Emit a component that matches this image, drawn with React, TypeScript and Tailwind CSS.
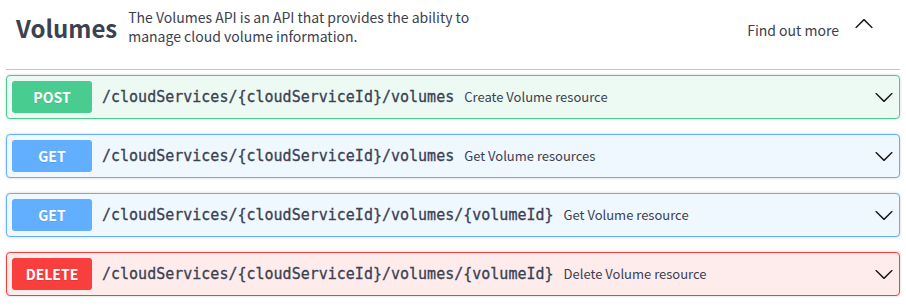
import React from "react";

type Op = {
  method: string;
  path: string;
  desc: string;
  badge: string;
  border: string;
  bg: string;
};

const ops: Op[] = [
  {
    method: "POST",
    path: "/cloudServices/{cloudServiceId}/volumes",
    desc: "Create Volume resource",
    badge: "bg-[#49cc90]",
    border: "border-[#49cc90]",
    bg: "bg-[#edfaf4]",
  },
  {
    method: "GET",
    path: "/cloudServices/{cloudServiceId}/volumes",
    desc: "Get Volume resources",
    badge: "bg-[#61affe]",
    border: "border-[#61affe]",
    bg: "bg-[#eff7ff]",
  },
  {
    method: "GET",
    path: "/cloudServices/{cloudServiceId}/volumes/{volumeId}",
    desc: "Get Volume resource",
    badge: "bg-[#61affe]",
    border: "border-[#61affe]",
    bg: "bg-[#eff7ff]",
  },
  {
    method: "DELETE",
    path: "/cloudServices/{cloudServiceId}/volumes/{volumeId}",
    desc: "Delete Volume resource",
    badge: "bg-[#f93e3e]",
    border: "border-[#f93e3e]",
    bg: "bg-[#feecec]",
  },
];

function Chevron({ up = false }: { up?: boolean }) {
  return (
    <svg
      width="20"
      height="20"
      viewBox="0 0 20 20"
      className={up ? "rotate-180" : ""}
      aria-hidden="true"
    >
      <path
        fill="#1a1a1a"
        d="M17.418 6.109c.272-.268.709-.268.979 0s.271.701 0 .969l-7.908 7.83c-.27.268-.707.268-.979 0l-7.908-7.83c-.27-.268-.27-.701 0-.969.271-.268.709-.268.979 0L10 13.25l7.418-7.141z"
      />
    </svg>
  );
}

export default function App() {
  return (
    <div className="w-[906px] h-[307px] bg-white px-[6px] font-['Noto_Sans_CJK_KR','Noto_Sans',sans-serif] text-[#3b4151]">
      <div className="flex items-center border-b border-[#c4c6cb] pl-[10px] pr-[28px] pt-[8px] pb-[23px] mb-[5px]">
        <h3 className="text-[24px] font-bold leading-none mr-[11px] mt-[1px]">Volumes</h3>
        <div className="text-[14px] leading-[19px]">
          The Volumes API is an API that provides the ability to
          <br />
          manage cloud volume information.
        </div>
        <div className="flex-1" />
        <a className="text-[14px] text-[#3b4151] mt-[6px] mr-[15px]">Find out more</a>
        <div className="-mt-[7px] -mr-[2px]">
          <Chevron up />
        </div>
      </div>
      <div className="flex flex-col gap-[15px]">
        {ops.map((op, i) => (
          <div
            key={i}
            className={`flex items-center h-[44px] border ${op.border} ${op.bg} rounded-[4px] p-[5px] shadow-[0_0_3px_rgba(0,0,0,0.19)]`}
          >
            <span
              className={`${op.badge} w-[80px] h-[32px] flex items-center justify-center rounded-[3px] text-white text-[14px] font-bold [text-shadow:0_1px_0_rgba(0,0,0,0.1)]`}
            >
              {op.method}
            </span>
            <span className="px-[10px] font-['DejaVu_Sans_Mono',monospace] text-[15px] font-normal text-[#3b4151] [-webkit-text-stroke:0.3px_#3b4151]">
              {op.path}
            </span>
            <span className="text-[13px] text-[#3b4151]">{op.desc}</span>
            <div className="flex-1" />
            <Chevron />
          </div>
        ))}
      </div>
    </div>
  );
}
